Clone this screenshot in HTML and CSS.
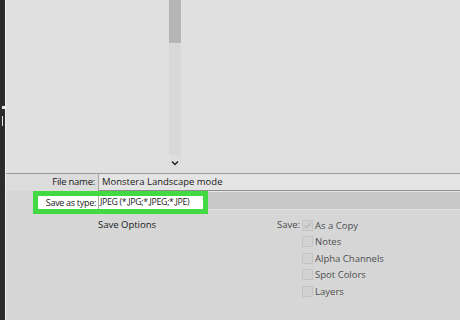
FILE: index.html
```html
<!DOCTYPE html>
<html>
<head>
<meta charset="utf-8">
<link rel="stylesheet" href="styles.css">
</head>
<body>
<div class="screen">
  <div class="edge">
    <span class="edge-mark edge-mark-a"></span>
    <span class="edge-mark edge-mark-b"></span>
  </div>
  <div class="dialog">
    <div class="browser">
      <div class="list-area"></div>
      <div class="scrollbar">
        <div class="thumb"></div>
        <div class="track"></div>
        <div class="arrow">
          <svg width="8" height="6" viewBox="0 0 8 6"><polyline points="1,1.5 4,4.5 7,1.5" fill="none" stroke="#222" stroke-width="1.4"/></svg>
        </div>
      </div>
      <div class="list-rest"></div>
    </div>
    <div class="panel">
      <div class="row row-name">
        <div class="label">File name:</div>
        <div class="field field-name">Monstera Landscape mode</div>
      </div>
      <div class="row row-type">
        <div class="spacer"></div>
        <div class="highlight">
          <div class="label label-type">Save as type:</div>
          <div class="field-type">JPEG (*.JPG;*.JPEG;*.JPE)</div>
        </div>
        <div class="type-rest"></div>
      </div>
      <div class="options">
        <div class="opt-title">Save Options</div>
        <div class="save-group">
          <div class="save-label">Save:</div>
          <ul class="checks">
            <li><span class="box checked"><svg width="9" height="9" viewBox="0 0 9 9"><polyline points="1.5,4.5 3.5,6.8 7.5,1.8" fill="none" stroke="#b4b4b4" stroke-width="1.1"/></svg></span>As a Copy</li>
            <li><span class="box"></span>Notes</li>
            <li><span class="box"></span>Alpha Channels</li>
            <li><span class="box"></span>Spot Colors</li>
            <li><span class="box"></span>Layers</li>
          </ul>
        </div>
      </div>
    </div>
  </div>
</div>
</body>
</html>
```
FILE: styles.css
```css
* { box-sizing: border-box; }
html, body { margin: 0; padding: 0; }
body {
  width: 460px;
  height: 320px;
  overflow: hidden;
  font-family: "Open Sans", "Noto Sans", sans-serif;
  font-size: 9.5px;
  color: #1a1a1a;
}
.screen {
  display: flex;
  width: 460px;
  height: 320px;
}
.edge {
  width: 6px;
  background: #2c2c2c;
  border-right: 1px solid #f2f2f2;
  position: relative;
}
.edge-mark {
  position: absolute;
  left: 2px;
  background: #e8e8e8;
}
.edge-mark-a { top: 106px; width: 3px; height: 3px; }
.edge-mark-b { top: 116px; width: 1px; height: 10px; }
.dialog {
  flex: 1;
  display: flex;
  flex-direction: column;
}
.browser {
  height: 173px;
  display: flex;
  background: #e0e0e0;
}
.list-area { width: 163px; }
.scrollbar {
  width: 12px;
  display: flex;
  flex-direction: column;
}
.thumb {
  height: 43px;
  background: #b6b6b6;
}
.track {
  flex: 1;
  background: #d8d8d8;
}
.arrow {
  height: 18px;
  display: flex;
  justify-content: center;
  padding-top: 5px;
  background: #dedede;
}
.list-rest { flex: 1; }
.panel {
  flex: 1;
  background: #d6d6d6;
  display: flex;
  flex-direction: column;
}
.label {
  white-space: nowrap;
  letter-spacing: -0.25px;
}
.row-name {
  display: flex;
  height: 18px;
  border-top: 1px solid #9a9a9a;
  background: #dcdcdc;
}
.row-name .label {
  width: 92px;
  text-align: right;
  padding-right: 3px;
  line-height: 16px;
}
.field-name {
  flex: 1;
  background: #e4e4e4;
  border-left: 1px solid #a8a8a8;
  border-bottom: 1px solid #8e8e8e;
  padding-left: 3px;
  line-height: 16px;
}
.row-type {
  display: flex;
  align-items: flex-start;
  height: 23px;
}
.spacer { width: 27px; }
.highlight {
  display: flex;
  width: 175px;
  height: 23px;
  border: 5px solid #43d943;
  background: #ffffff;
}
.label-type {
  width: 60px;
  text-align: right;
  padding-right: 2px;
  line-height: 13px;
  font-size: 9px;
  letter-spacing: -0.3px;
}
.field-type {
  flex: 1;
  border-left: 1px solid #a8a8a8;
  padding-left: 1px;
  line-height: 13px;
  white-space: nowrap;
  font-size: 8.8px;
  letter-spacing: -0.35px;
}
.type-rest {
  flex: 1;
  height: 19px;
  background: #c7c7c7;
  border-top: 1px solid #e6e6e6;
  border-bottom: 1px solid #e2e2e2;
}
.options {
  display: flex;
  padding-top: 4px;
}
.opt-title {
  width: 271px;
  padding-left: 92px;
  line-height: 14px;
}
.save-group {
  display: flex;
  color: #4a4a4a;
}
.save-label {
  line-height: 14px;
  padding-right: 2px;
}
.checks {
  list-style: none;
  margin: 0;
  padding: 0;
  display: flex;
  flex-direction: column;
  gap: 2.5px;
}
.checks li {
  display: flex;
  align-items: center;
  height: 14px;
  color: #4e4e4e;
}
.box {
  width: 11px;
  height: 11px;
  margin-right: 2px;
  background: #d2d2d2;
  border: 1px solid #c4c4c4;
  display: flex;
  align-items: center;
  justify-content: center;
}
```
